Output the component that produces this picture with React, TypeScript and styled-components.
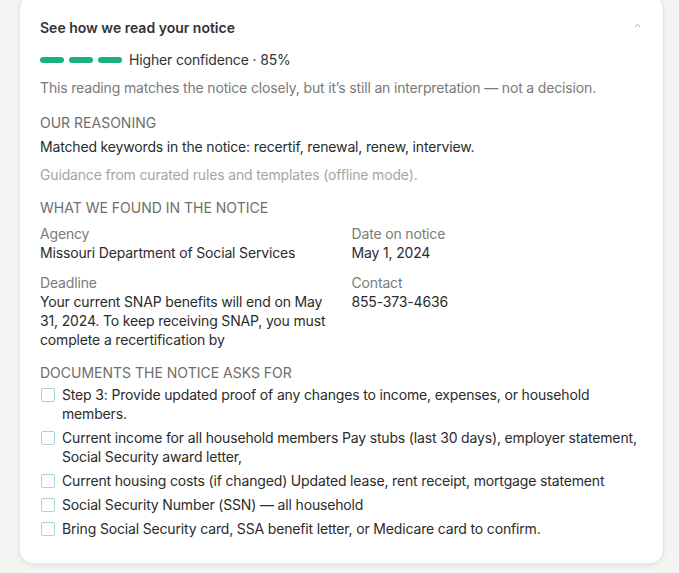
import React from "react";
import styled, { createGlobalStyle } from "styled-components";

const Global = createGlobalStyle`
  html, body { margin: 0; padding: 0; background: #f4f4f2; }
  body { font-family: Inter, "Noto Sans", sans-serif; -webkit-font-smoothing: antialiased; letter-spacing: -0.16px; }
`;

const Page = styled.div`
  padding: 0 15px 12px 19px;
  overflow: hidden;
`;

const Card = styled.section`
  margin-top: -6px;
  background: #fff;
  border: 1px solid #e6e6e3;
  border-radius: 14px;
  box-shadow: 0 2px 5px rgba(0, 0, 0, 0.06);
  padding: 22px 20px 25px 20px;
  display: flex;
  flex-direction: column;
`;

const Header = styled.div`
  display: flex;
  align-items: center;
  justify-content: space-between;
  height: 20px;
`;

const Title = styled.h2`
  margin: 0;
  font-size: 14px;
  font-weight: 600;
  color: #333;
  letter-spacing: 0;
`;

const Chevron = styled.span`
  color: #a9a9a9;
  display: flex;
  margin-right: 2px;
  margin-top: -3px;
`;

const Confidence = styled.div`
  display: flex;
  align-items: center;
  gap: 5px;
  margin-top: 14px;
  font-size: 14px;
  color: #333;
`;

const Bar = styled.span`
  width: 24px;
  height: 6px;
  border-radius: 3px;
  background: #1bb37c;
`;

const ConfLabel = styled.span`
  margin-left: 2px;
`;

const Text = styled.p<{ $tone?: "body" | "muted" | "faint"; $top?: number }>`
  margin: ${(p) => p.$top ?? 0}px 0 0;
  font-size: 14px;
  line-height: 19px;
  color: ${(p) => (p.$tone === "muted" ? "#7a7a78" : p.$tone === "faint" ? "#a5a5a3" : "#2b2b2b")};
`;

const SectionTitle = styled.h3<{ $top: number }>`
  margin: ${(p) => p.$top}px 0 0;
  font-size: 14px;
  line-height: 19px;
  font-weight: 400;
  color: #6e6e6b;
  text-transform: uppercase;
  letter-spacing: 0;
`;

const FieldGrid = styled.div`
  display: grid;
  grid-template-columns: 1fr 1fr;
  column-gap: 20px;
  row-gap: 11px;
  margin-top: 7px;
`;

const Field = styled.div`
  display: flex;
  flex-direction: column;
`;

const FieldLabel = styled.span`
  font-size: 14px;
  line-height: 19px;
  color: #7a7a78;
`;

const FieldValue = styled.span`
  font-size: 14px;
  line-height: 19px;
  color: #2b2b2b;
`;

const DocList = styled.ul`
  list-style: none;
  margin: 3px 0 0;
  padding: 0;
  display: flex;
  flex-direction: column;
  gap: 5px;
`;

const DocItem = styled.li`
  display: flex;
  align-items: flex-start;
  gap: 7px;
  font-size: 14px;
  line-height: 19px;
  color: #2b2b2b;
`;

const Box = styled.span`
  flex: none;
  width: 12px;
  height: 12px;
  margin-top: 3px;
  margin-left: 1px;
  border: 1px solid #a9d6cc;
  border-radius: 2px;
  background: #fff;
`;

const docs = [
  "Step 3: Provide updated proof of any changes to income, expenses, or household members.",
  "Current income for all household members Pay stubs (last 30 days), employer statement, Social Security award letter,",
  "Current housing costs (if changed) Updated lease, rent receipt, mortgage statement",
  "Social Security Number (SSN) — all household",
  "Bring Social Security card, SSA benefit letter, or Medicare card to confirm.",
];

export default function App() {
  return (
    <Page>
      <Global />
      <Card>
        <Header>
          <Title>See how we read your notice</Title>
          <Chevron>
            <svg width="7" height="5" viewBox="0 0 7 5" fill="none">
              <path d="M1 4L3.5 1.2L6 4" stroke="currentColor" strokeWidth="1" />
            </svg>
          </Chevron>
        </Header>
        <Confidence>
          <Bar />
          <Bar />
          <Bar />
          <ConfLabel>Higher confidence · 85%</ConfLabel>
        </Confidence>
        <Text $tone="muted" $top={10}>
          This reading matches the notice closely, but it’s still an interpretation — not a decision.
        </Text>

        <SectionTitle $top={16}>Our reasoning</SectionTitle>
        <Text $top={5}>Matched keywords in the notice: recertif, renewal, renew, interview.</Text>
        <Text $tone="faint" $top={9}>Guidance from curated rules and templates (offline mode).</Text>

        <SectionTitle $top={14}>What we found in the notice</SectionTitle>
        <FieldGrid>
          <Field>
            <FieldLabel>Agency</FieldLabel>
            <FieldValue>Missouri Department of Social Services</FieldValue>
          </Field>
          <Field>
            <FieldLabel>Date on notice</FieldLabel>
            <FieldValue>May 1, 2024</FieldValue>
          </Field>
          <Field>
            <FieldLabel>Deadline</FieldLabel>
            <FieldValue>
              Your current SNAP benefits will end on May 31, 2024. To keep receiving SNAP, you must complete a recertification by
            </FieldValue>
          </Field>
          <Field>
            <FieldLabel>Contact</FieldLabel>
            <FieldValue>855-373-4636</FieldValue>
          </Field>
        </FieldGrid>

        <SectionTitle $top={14}>Documents the notice asks for</SectionTitle>
        <DocList>
          {docs.map((d) => (
            <DocItem key={d}>
              <Box />
              <span>{d}</span>
            </DocItem>
          ))}
        </DocList>
      </Card>
    </Page>
  );
}
